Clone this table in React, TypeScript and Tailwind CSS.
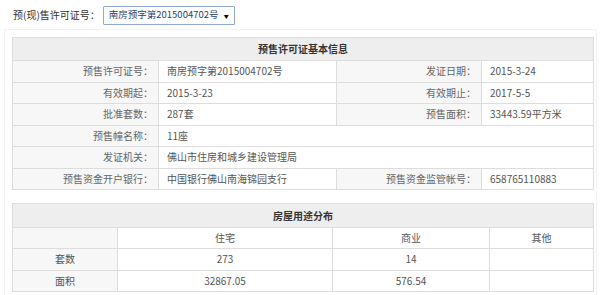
const font = { fontFamily: '"Noto Sans CJK SC", "Noto Sans", sans-serif' };

const info: [string, string, string?, string?][] = [
  ['预售许可证号：', '南房预字第2015004702号', '发证日期：', '2015-3-24'],
  ['有效期起：', '2015-3-23', '有效期止：', '2017-5-5'],
  ['批准套数：', '287套', '预售面积：', '33443.59平方米'],
  ['预售幢名称：', '11座'],
  ['发证机关：', '佛山市住房和城乡建设管理局'],
  ['预售资金开户银行：', '中国银行佛山南海锦园支行', '预售资金监管帐号：', '658765110883'],
];

const usage = [
  ['套数', '273', '14', ''],
  ['面积', '32867.05', '576.54', ''],
];

export default function App() {
  return (
    <div className="w-[600px] h-[295px] bg-white overflow-hidden text-[10px] leading-none" style={font}>
      <div className="flex items-center h-[29px] pl-[13px] pt-[1px]">
        <span className="text-[#333]">预(现)售许可证号：</span>
        <div className="ml-[3px] flex items-center w-[132px] h-[19px] border border-[#8fa8d6] rounded-[1px] pl-[5px] pr-[5px] text-[9.5px] text-[#2a3f66] whitespace-nowrap">
          <span className="flex-1">南房预字第2015004702号</span>
          <span className="text-[5px] text-black">▼</span>
        </div>
      </div>

      <div className="ml-[4px] w-[593px] border-l border-r border-t border-[#f2f2f2] pt-[7px] pl-[7px] pb-[4px]">
        <table className="w-[581px] border-collapse table-fixed">
          <colgroup>
            <col className="w-[146px]" />
            <col className="w-[178px]" />
            <col className="w-[145px]" />
            <col className="w-[112px]" />
          </colgroup>
          <thead>
            <tr className="h-[23px] bg-[#eeeeee]">
              <th colSpan={4} className="border border-[#dddddd] font-bold text-[#333] text-center">
                预售许可证基本信息
              </th>
            </tr>
          </thead>
          <tbody>
            {info.map((r, i) => (
              <tr key={i} className="h-[21.5px]">
                <td className="border border-[#dddddd] bg-[#f7f7f7] text-right pr-[5px] text-[#666]">{r[0]}</td>
                {r[2] ? (
                  <>
                    <td className="border border-[#dddddd] pl-[8px] text-[#555]">{r[1]}</td>
                    <td className="border border-[#dddddd] bg-[#f7f7f7] text-right pr-[5px] text-[#666]">{r[2]}</td>
                    <td className="border border-[#dddddd] pl-[8px] text-[#555]">{r[3]}</td>
                  </>
                ) : (
                  <td colSpan={3} className="border border-[#dddddd] pl-[8px] text-[#555]">{r[1]}</td>
                )}
              </tr>
            ))}
          </tbody>
        </table>

        <table className="mt-[13px] w-[581px] border-collapse table-fixed">
          <colgroup>
            <col className="w-[105px]" />
            <col className="w-[215px]" />
            <col className="w-[157px]" />
            <col className="w-[104px]" />
          </colgroup>
          <thead>
            <tr className="h-[24px] bg-[#eeeeee]">
              <th colSpan={4} className="border border-[#dddddd] font-bold text-[#333] text-center">
                房屋用途分布
              </th>
            </tr>
          </thead>
          <tbody>
            <tr className="h-[21px]">
              <td className="border border-[#dddddd] bg-[#f7f7f7]"></td>
              <td className="border border-[#dddddd] text-center text-[#555]">住宅</td>
              <td className="border border-[#dddddd] text-center text-[#555]">商业</td>
              <td className="border border-[#dddddd] text-center text-[#555]">其他</td>
            </tr>
            {usage.map((r, i) => (
              <tr key={i} className="h-[21.5px]">
                <td className="border border-[#dddddd] bg-[#f7f7f7] text-center text-[#555]">{r[0]}</td>
                <td className="border border-[#dddddd] text-center text-[#555]">{r[1]}</td>
                <td className="border border-[#dddddd] text-center text-[#555]">{r[2]}</td>
                <td className="border border-[#dddddd] text-center text-[#555]">{r[3]}</td>
              </tr>
            ))}
          </tbody>
        </table>
      </div>
    </div>
  );
}
